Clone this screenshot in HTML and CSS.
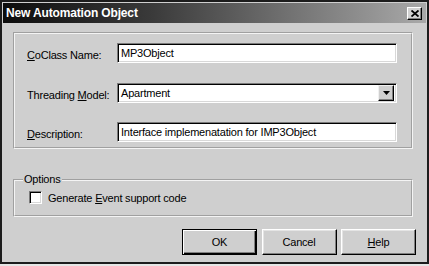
FILE: index.html
```html
<!DOCTYPE html>
<html>

<head>
    <title>New Automation Object</title>
    <link rel="stylesheet" href="styles.css">
</head>

<body>
    <div class="window">
        <div class="titlebar">
            <span class="title">New Automation Object</span>
            <span class="close">
                <svg width="8" height="7" viewBox="0 0 8 7">
                    <path d="M0.5 0.5 L7.5 6.5 M7.5 0.5 L0.5 6.5" stroke="#000" stroke-width="1.8" fill="none" />
                </svg>
            </span>
        </div>

        <div class="content">
            <div class="panel">
                <label class="field-label"><u>C</u>oClass Name:</label>
                <div class="textbox">MP3Object</div>

                <label class="field-label">Threading <u>M</u>odel:</label>
                <div class="textbox combo">
                    <span class="combo-value">Apartment</span>
                    <span class="combo-btn">
                        <svg width="7" height="4" viewBox="0 0 7 4">
                            <path d="M0 0 H7 L3.5 4 Z" fill="#000" />
                        </svg>
                    </span>
                </div>

                <label class="field-label"><u>D</u>escription:</label>
                <div class="textbox">Interface implemenatation for IMP3Object</div>
            </div>

            <fieldset class="options">
                <legend>Options</legend>
                <div class="check-row">
                    <span class="checkbox"></span>
                    <span>Generate <u>E</u>vent support code</span>
                </div>
            </fieldset>

            <div class="buttons">
                <button class="btn default">OK</button>
                <button class="btn">Cancel</button>
                <button class="btn"><u>H</u>elp</button>
            </div>
        </div>
    </div>
</body>

</html>
```

FILE: styles.css
```css
body {
    margin: 0;
    background-color: #e6e6e6;
    font-family: "Liberation Sans", Arial, sans-serif;
    font-size: 11px;
    letter-spacing: -0.2px;
    color: #000;
}

.window {
    width: 429px;
    height: 264px;
    box-sizing: border-box;
    background-color: #cfcfcf;
    border: 2px solid #1c1c1c;
    padding: 1px;
}

.titlebar {
    height: 20px;
    display: flex;
    align-items: center;
    justify-content: space-between;
    padding: 0 4px 0 3px;
    background: linear-gradient(to right, #0c0c0c 0%, #3a3a3a 35%, #a9a9a9 100%);
}

.title {
    color: #fff;
    font-weight: bold;
    font-size: 12px;
    letter-spacing: -0.15px;
}

.close {
    width: 15px;
    height: 13px;
    box-sizing: border-box;
    display: flex;
    align-items: center;
    justify-content: center;
    background-color: #d2d2d2;
    border: 1px solid;
    border-color: #fff #000 #000 #fff;
    box-shadow: inset -1px -1px 0 #808080;
}

.content {
    padding: 9px 10px 0 10px;
}

.panel {
    width: 400px;
    height: 117px;
    box-sizing: border-box;
    border: 2px groove #f4f4f4;
    padding: 9px 14px 0 12px;
    display: grid;
    grid-template-columns: 90px 280px;
    grid-auto-rows: 20px;
    row-gap: 19.5px;
}

.field-label {
    align-self: center;
    margin-top: 4px;
}

.textbox {
    box-sizing: border-box;
    height: 20px;
    background-color: #fff;
    border: 1px solid;
    border-color: #7a7a7a #fff #fff #7a7a7a;
    box-shadow: inset 1px 1px 0 #000, inset -1px -1px 0 #d8d8d8;
    padding: 0 3px;
    line-height: 18px;
    white-space: nowrap;
}

.combo {
    display: flex;
    justify-content: space-between;
    align-items: center;
    padding-right: 2px;
}

.combo-value {
    padding-top: 1px;
}

.combo-btn {
    width: 16px;
    height: 16px;
    box-sizing: border-box;
    display: flex;
    align-items: center;
    justify-content: center;
    background-color: #cfcfcf;
    border: 1px solid;
    border-color: #f0f0f0 #000 #000 #f0f0f0;
    box-shadow: inset -1px -1px 0 #808080;
}

.options {
    width: 400px;
    height: 44px;
    box-sizing: border-box;
    margin: 24px 0 0 0;
    border: 2px groove #f4f4f4;
    padding: 0 0 0 8px;
}

.options legend {
    padding: 0 1px;
    line-height: 13px;
}

.check-row {
    display: flex;
    align-items: center;
    gap: 6px;
    margin: 5px 0 0 6px;
}

.checkbox {
    width: 13px;
    height: 13px;
    box-sizing: border-box;
    background-color: #fff;
    border: 1px solid;
    border-color: #7a7a7a #fff #fff #7a7a7a;
    box-shadow: inset 1px 1px 0 #000, inset -1px -1px 0 #d8d8d8;
}

.buttons {
    display: flex;
    justify-content: flex-end;
    gap: 4.5px;
    margin-top: 12px;
}

.btn {
    width: 75px;
    height: 26px;
    box-sizing: border-box;
    font-family: inherit;
    font-size: 11px;
    letter-spacing: -0.2px;
    color: #000;
    background-color: #cfcfcf;
    border: 1px solid;
    border-color: #fff #000 #000 #fff;
    box-shadow: inset -1px -1px 0 #808080, inset 1px 1px 0 #e4e4e4;
    padding: 0;
}

.btn.default {
    border-color: #000;
    box-shadow: inset 1px 1px 0 #fff, inset -1px -1px 0 #000, inset -2px -2px 0 #808080;
}
```
